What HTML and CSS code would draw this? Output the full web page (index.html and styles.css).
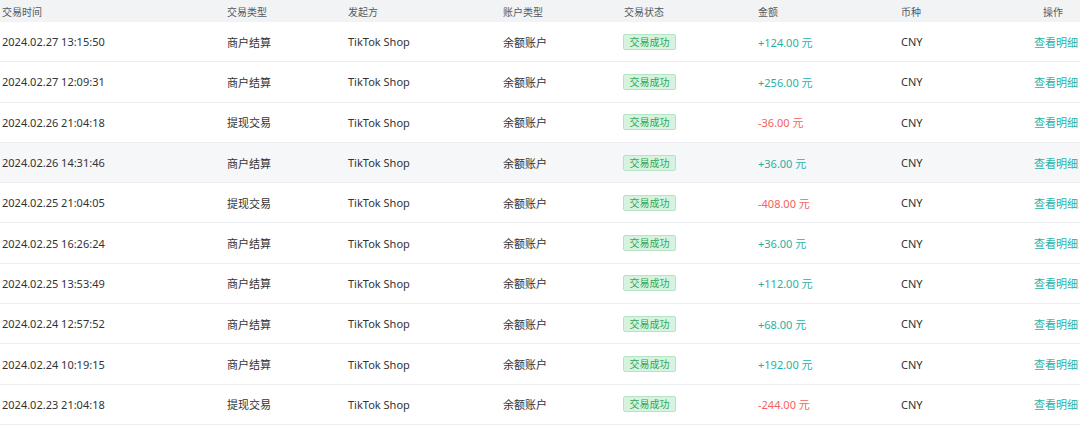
FILE: index.html
```html
<!DOCTYPE html>
<html lang="zh-CN">
<head>
<meta charset="utf-8">
<title>交易记录</title>
<link rel="stylesheet" href="styles.css">
</head>
<body>
<div class="table">
  <div class="row head">
    <div>交易时间</div><div>交易类型</div><div>发起方</div><div>账户类型</div><div>交易状态</div><div>金额</div><div>币种</div><div class="op">操作</div>
  </div>
  <div class="row">
    <div>2024.02.27 13:15:50</div><div>商户结算</div><div>TikTok Shop</div><div>余额账户</div><div><span class="tag">交易成功</span></div><div class="plus">+124.00 元</div><div>CNY</div><div class="op link">查看明细</div>
  </div>
  <div class="row">
    <div>2024.02.27 12:09:31</div><div>商户结算</div><div>TikTok Shop</div><div>余额账户</div><div><span class="tag">交易成功</span></div><div class="plus">+256.00 元</div><div>CNY</div><div class="op link">查看明细</div>
  </div>
  <div class="row">
    <div>2024.02.26 21:04:18</div><div>提现交易</div><div>TikTok Shop</div><div>余额账户</div><div><span class="tag">交易成功</span></div><div class="minus">-36.00 元</div><div>CNY</div><div class="op link">查看明细</div>
  </div>
  <div class="row hover">
    <div>2024.02.26 14:31:46</div><div>商户结算</div><div>TikTok Shop</div><div>余额账户</div><div><span class="tag">交易成功</span></div><div class="plus">+36.00 元</div><div>CNY</div><div class="op link">查看明细</div>
  </div>
  <div class="row">
    <div>2024.02.25 21:04:05</div><div>提现交易</div><div>TikTok Shop</div><div>余额账户</div><div><span class="tag">交易成功</span></div><div class="minus">-408.00 元</div><div>CNY</div><div class="op link">查看明细</div>
  </div>
  <div class="row">
    <div>2024.02.25 16:26:24</div><div>商户结算</div><div>TikTok Shop</div><div>余额账户</div><div><span class="tag">交易成功</span></div><div class="plus">+36.00 元</div><div>CNY</div><div class="op link">查看明细</div>
  </div>
  <div class="row">
    <div>2024.02.25 13:53:49</div><div>商户结算</div><div>TikTok Shop</div><div>余额账户</div><div><span class="tag">交易成功</span></div><div class="plus">+112.00 元</div><div>CNY</div><div class="op link">查看明细</div>
  </div>
  <div class="row">
    <div>2024.02.24 12:57:52</div><div>商户结算</div><div>TikTok Shop</div><div>余额账户</div><div><span class="tag">交易成功</span></div><div class="plus">+68.00 元</div><div>CNY</div><div class="op link">查看明细</div>
  </div>
  <div class="row">
    <div>2024.02.24 10:19:15</div><div>商户结算</div><div>TikTok Shop</div><div>余额账户</div><div><span class="tag">交易成功</span></div><div class="plus">+192.00 元</div><div>CNY</div><div class="op link">查看明细</div>
  </div>
  <div class="row">
    <div>2024.02.23 21:04:18</div><div>提现交易</div><div>TikTok Shop</div><div>余额账户</div><div><span class="tag">交易成功</span></div><div class="minus">-244.00 元</div><div>CNY</div><div class="op link">查看明细</div>
  </div>
</div>
</body>
</html>
```
FILE: styles.css
```css
html, body {
  margin: 0;
  padding: 0;
  background: #ffffff;
}
body {
  font-family: "Noto Sans", "Noto Sans CJK SC", sans-serif;
  font-size: 11px;
  color: #333333;
}
.table {
  width: 1080px;
}
.row {
  display: grid;
  grid-template-columns: 225px 121px 155px 121px 134px 143px 100px 1fr;
  align-items: center;
  height: 40.3px;
  box-sizing: border-box;
  border-bottom: 1px solid #ebedf0;
  padding: 0 2px 0 2px;
}
.row.head {
  height: 22px;
  background: #f2f3f5;
  border-bottom: none;
  font-size: 10px;
  color: #555a61;
}
.row.hover {
  background: #f6f7f9;
}
.op {
  text-align: right;
}
.head .op {
  padding-right: 15px;
}
.link {
  color: #1fb1a8;
  font-size: 11px;
}
.plus {
  color: #1fb1a8;
}
.minus {
  color: #f5615c;
}
.tag {
  display: inline-block;
  box-sizing: border-box;
  width: 53px;
  height: 16px;
  line-height: 14px;
  text-align: center;
  font-size: 10px;
  color: #2fa85a;
  background: #d8f2e0;
  border: 1px solid #b5e4c4;
  border-radius: 2px;
  margin-left: -1px;
}
```
